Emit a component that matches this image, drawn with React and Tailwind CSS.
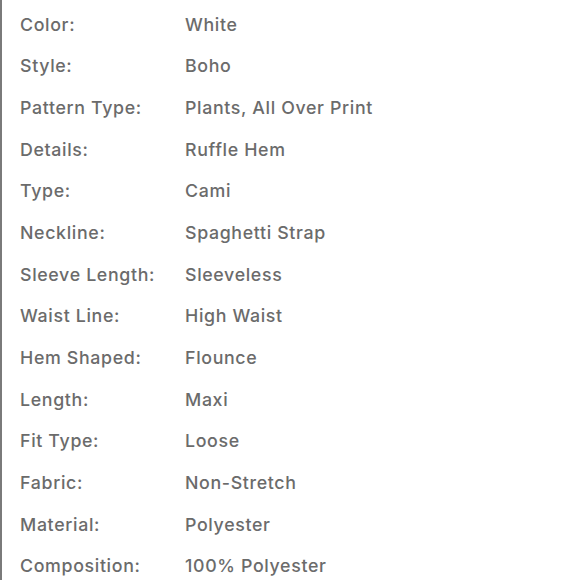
const rows = [
  ["Color:", "White"],
  ["Style:", "Boho"],
  ["Pattern Type:", "Plants, All Over Print"],
  ["Details:", "Ruffle Hem"],
  ["Type:", "Cami"],
  ["Neckline:", "Spaghetti Strap"],
  ["Sleeve Length:", "Sleeveless"],
  ["Waist Line:", "High Waist"],
  ["Hem Shaped:", "Flounce"],
  ["Length:", "Maxi"],
  ["Fit Type:", "Loose"],
  ["Fabric:", "Non-Stretch"],
  ["Material:", "Polyester"],
  ["Composition:", "100% Polyester"],
]

export default function App() {
  return (
    <div className="w-[580px] h-[580px] overflow-hidden bg-white flex">
      <div className="w-[2px] h-full bg-[#7a7a7a]"></div>
      <div className="flex-1 pt-[4px] pl-[18px] font-['Inter',sans-serif] font-medium text-[17.8px] tracking-[0.65px] text-[#6b6b6b]">
        {rows.map(([label, value]) => (
          <div key={label} className="h-[41.7px] flex items-center">
            <span className="w-[165px]">{label}</span>
            <span>{value}</span>
          </div>
        ))}
      </div>
    </div>
  )
}
